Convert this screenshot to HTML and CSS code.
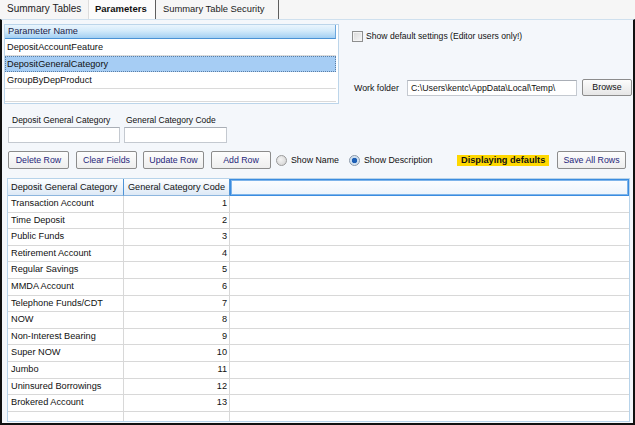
FILE: index.html
```html
<!DOCTYPE html>
<html>
<head>
<meta charset="utf-8">
<title>Parameters</title>
<link rel="stylesheet" href="styles.css">
</head>
<body>
<div class="app">
  <div class="tabs">
    <div class="tab tab-1">Summary Tables</div>
    <div class="tab tab-2">Parameters</div>
    <div class="tab tab-3">Summary Table Security</div>
    <div class="tab-fill"></div>
  </div>
  <div class="panel">
    <div class="top">
      <div class="plist">
        <div class="plist-head">Parameter Name</div>
        <div class="plist-row r17">DepositAccountFeature</div>
        <div class="plist-row r16 selected">DepositGeneralCategory</div>
        <div class="plist-row r17">GroupByDepProduct</div>
        <div class="plist-row empty"></div>
      </div>
      <div class="side">
        <div class="chk"><span class="chkbox"></span><span class="chk-text">Show default settings (Editor users only!)</span></div>
        <div class="work">
          <span class="work-label">Work folder</span>
          <div class="textbox path">C:\Users\kentc\AppData\Local\Temp\</div>
          <div class="btn browse">Browse</div>
        </div>
      </div>
    </div>
    <div class="fields">
      <div class="field f1"><div class="flabel">Deposit General Category</div><div class="textbox"></div></div>
      <div class="field f2"><div class="flabel">General Category Code</div><div class="textbox"></div></div>
    </div>
    <div class="actions">
      <div class="btn act b-del">Delete Row</div>
      <div class="btn act b-clear">Clear Fields</div>
      <div class="btn act b-upd">Update Row</div>
      <div class="btn act b-add">Add Row</div>
      <div class="radio r-name"><span class="rdot"></span>Show Name</div>
      <div class="radio r-desc on"><span class="rdot"></span>Show Description</div>
      <span class="defaults">Displaying defaults</span>
      <div class="btn act save">Save All Rows</div>
    </div>
    <div class="grid">
      <div class="grow ghead"><div class="c c1">Deposit General Category</div><div class="c c2">General Category Code</div><div class="c c3"></div></div>
      <div class="grow"><div class="c c1">Transaction Account</div><div class="c c2">1</div><div class="c c3"></div></div>
      <div class="grow"><div class="c c1">Time Deposit</div><div class="c c2">2</div><div class="c c3"></div></div>
      <div class="grow"><div class="c c1">Public Funds</div><div class="c c2">3</div><div class="c c3"></div></div>
      <div class="grow"><div class="c c1">Retirement Account</div><div class="c c2">4</div><div class="c c3"></div></div>
      <div class="grow"><div class="c c1">Regular Savings</div><div class="c c2">5</div><div class="c c3"></div></div>
      <div class="grow"><div class="c c1">MMDA Account</div><div class="c c2">6</div><div class="c c3"></div></div>
      <div class="grow"><div class="c c1">Telephone Funds/CDT</div><div class="c c2">7</div><div class="c c3"></div></div>
      <div class="grow"><div class="c c1">NOW</div><div class="c c2">8</div><div class="c c3"></div></div>
      <div class="grow"><div class="c c1">Non-Interest Bearing</div><div class="c c2">9</div><div class="c c3"></div></div>
      <div class="grow"><div class="c c1">Super NOW</div><div class="c c2">10</div><div class="c c3"></div></div>
      <div class="grow"><div class="c c1">Jumbo</div><div class="c c2">11</div><div class="c c3"></div></div>
      <div class="grow"><div class="c c1">Uninsured Borrowings</div><div class="c c2">12</div><div class="c c3"></div></div>
      <div class="grow"><div class="c c1">Brokered Account</div><div class="c c2">13</div><div class="c c3"></div></div>
      <div class="grow"><div class="c c1"></div><div class="c c2"></div><div class="c c3"></div></div>
    </div>
  </div>
</div>
</body>
</html>
```

FILE: styles.css
```css
* { box-sizing: border-box; }
html, body { margin: 0; padding: 0; }
body {
  width: 635px;
  height: 425px;
  overflow: hidden;
  background: #ffffff;
  font-family: "Liberation Sans", Arial, sans-serif;
  font-size: 8.8px;
  color: #111;
}
.app { width: 635px; height: 425px; display: flex; flex-direction: column; }

/* tabs */
.tabs { height: 19px; display: flex; background: #f6f6f6; }
.tab { height: 19px; line-height: 17px; font-size: 9.7px; padding-left: 7px; color: #222; white-space: nowrap; }
.tab-1 { width: 88px; font-size: 10px; }
.tab-2 { width: 68px; padding-left: 6px; font-weight: bold; font-size: 9.5px; background: #fcfcfc; border-left: 1px solid #dddddd; border-right: 1px solid #5e5e5e; color: #111; }
.tab-3 { width: 123px; font-size: 9.4px; border-right: 1px solid #5e5e5e; }
.tab-fill { flex: 1; }

/* panel */
.panel {
  flex: 1;
  display: flex;
  flex-direction: column;
  background: #f4f7fb;
  border-top: 1px solid #cfe0ee;
  border-left: 2px solid #111;
  border-right: 2px solid #111;
  border-bottom: 2px solid #111;
  padding-top: 4px;
}

.top { display: flex; height: 80px; margin-left: 2px; }
.plist {
  width: 335px;
  height: 80px;
  border: 1px solid #bcd5ea;
  background: #fff;
  display: flex;
  flex-direction: column;
  font-size: 9.2px;
}
.plist-head {
  height: 14px;
  line-height: 13px;
  padding-left: 3px;
  margin-right: 2px;
  color: #1c1c48;
  background: linear-gradient(#eaf5fd 0%, #d3eafa 45%, #a2cff3 100%);
  border-bottom: 1px solid #4b92d4;
  border-right: 1px solid #6ba7de;
}
.plist-row {
  padding-left: 2px;
  margin-right: 2px;
  border-bottom: 1px solid #dadada;
  white-space: nowrap;
}
.r17 { height: 17px; line-height: 16px; }
.r16 { height: 16px; line-height: 15px; }
.plist-row.selected { background: #a6cdf4; border: 1px dotted #5b7fa6; padding-left: 1px; }
.plist-row.empty { height: 13px; }

.side { margin-left: 13px; display: flex; flex-direction: column; }
.chk { margin-top: 7px; height: 11px; display: flex; align-items: center; }
.chkbox {
  width: 11px; height: 11px;
  border: 1px solid #8e8f8f;
  background: linear-gradient(135deg, #d9d9d9, #f7f7f7);
  box-shadow: inset 0 0 0 1px #f4f4f4;
}
.chk-text { margin-left: 3px; line-height: 11px; font-size: 8.6px; }

.work { margin-top: 37px; height: 17px; display: flex; align-items: center; }
.work-label { width: 53px; margin-left: 2px; }
.textbox {
  height: 16px;
  background: #fff;
  border: 1px solid #c4c9d0;
  border-top-color: #a9aeb6;
  line-height: 14px;
  white-space: nowrap;
  overflow: hidden;
}
.path { width: 170px; padding-left: 3px; }

.btn {
  height: 17px;
  line-height: 15px;
  text-align: center;
  border: 1px solid #8c8c8c;
  border-radius: 2px;
  background: linear-gradient(#fcfcfc, #e6e6e6);
  white-space: nowrap;
}
.browse { width: 50px; margin-left: 5px; color: #111; }

/* fields */
.fields { display: flex; margin-top: 10px; padding-left: 6px; gap: 4px; }
.field { display: flex; flex-direction: column; }
.flabel { height: 12px; line-height: 12px; margin-bottom: 1px; white-space: nowrap; font-size: 8.5px; }
.f1 { width: 112px; }
.f1 .flabel { padding-left: 4px; }
.f2 { width: 103px; }
.f2 .flabel { padding-left: 2px; }

/* actions */
.actions { display: flex; align-items: center; height: 18px; margin-top: 8px; padding-left: 6px; padding-right: 7px; }
.act { height: 18px; line-height: 16px; color: #25257a; background: linear-gradient(#fdfdfd, #eeeeee); }
.b-del { width: 61px; }
.b-clear { width: 61px; margin-left: 7px; }
.b-upd { width: 61px; margin-left: 6px; }
.b-add { width: 60px; margin-left: 7px; }
.radio { display: flex; align-items: center; white-space: nowrap; }
.r-name { width: 73px; margin-left: 5px; }
.r-desc { width: 108px; }
.rdot {
  width: 11px; height: 11px;
  border-radius: 50%;
  border: 1px solid #9a9a9a;
  background: radial-gradient(circle at 40% 40%, #f4f4f4, #cfcfcf);
  margin-right: 4px;
}
.r-desc .rdot { background: radial-gradient(circle, #1d5fb5 0 2.5px, #c9dcef 3px, #eef3f8 100%); border-color: #8a98a8; }
.defaults { background: #ffd800; font-weight: bold; padding: 0 4px; line-height: 11px; height: 11px; color: #111; font-size: 9.2px; }
.save { width: 69px; margin-left: auto; }

/* grid */
.grid {
  margin-top: 9px;
  margin-left: 5px;
  margin-right: 3px;
  height: 244px;
  overflow: hidden;
  background: #fff;
  border: 1px solid #b7d3ea;
  font-size: 9.2px;
}
.grow { display: flex; height: 16.6px; }
.c {
  border-right: 1px solid #d8d8d8;
  border-bottom: 1px solid #d8d8d8;
  padding: 0 3px;
  line-height: 15.6px;
  white-space: nowrap;
  overflow: hidden;
}
.c1 { width: 116px; }
.c2 { width: 106px; text-align: right; padding-right: 2px; }
.c3 { flex: 1; border-right: none; }
.ghead { height: 17px; }
.ghead .c {
  line-height: 16px;
  background: linear-gradient(#fdfeff, #dde9f6);
  border-right: 1px solid #4e93d6;
  border-bottom: 1px solid #8db6de;
}
.ghead .c2 { text-align: center; padding: 0; }
.ghead .c3 {
  border: 1px solid #3a8ce0;
  box-shadow: inset 0 0 0 1px #7db4ea;
  background: linear-gradient(#fbfdff, #edf4fb);
}
```
